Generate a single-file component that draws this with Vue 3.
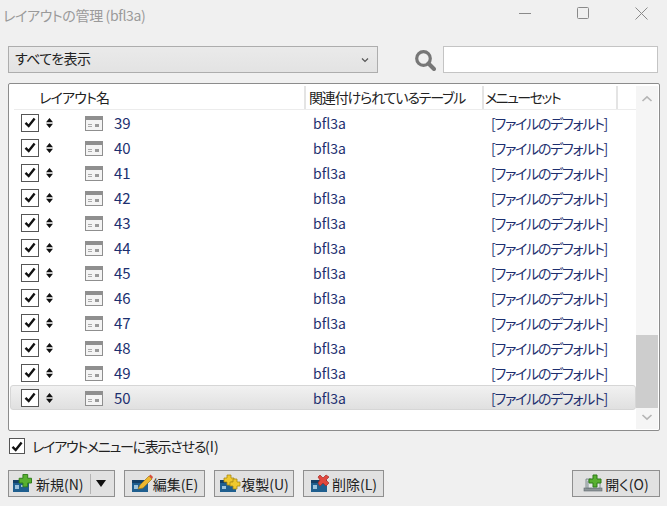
<script setup>
const rows = [39, 40, 41, 42, 43, 44, 45, 46, 47, 48, 49, 50]
const selected = 50
</script>

<template>
  <div class="window">
    <div class="titlebar">
      <span class="title">レイアウトの管理 (bfl3a)</span>
      <div class="controls">
        <svg width="12" height="12" viewBox="0 0 12 12"><path d="M0 6.5h12" stroke="#8a8a8a" fill="none" /></svg>
        <svg width="12" height="12" viewBox="0 0 12 12"><rect x="0.5" y="0.5" width="11" height="11" rx="1" stroke="#8a8a8a" fill="none" /></svg>
        <svg width="13" height="13" viewBox="0 0 13 13"><path d="M0.5 0.5l12 12M12.5 0.5l-12 12" stroke="#8a8a8a" fill="none" /></svg>
      </div>
    </div>

    <div class="filter">
      <div class="combo">
        <span class="combo-text">すべてを表示</span>
        <svg width="8" height="6" viewBox="0 0 8 6"><path d="M1 1.5l3 3 3-3" stroke="#555" stroke-width="1.2" fill="none" /></svg>
      </div>
      <svg class="search-icon" width="22" height="22" viewBox="0 0 22 22">
        <circle cx="9.5" cy="9.5" r="6.8" stroke="#777" stroke-width="3.2" fill="none" />
        <path d="M14.5 14.5l5.5 5.5" stroke="#777" stroke-width="4" stroke-linecap="round" />
      </svg>
      <input class="search" type="text" />
    </div>

    <div class="list">
      <div class="list-main">
        <div class="head">
          <div class="head-cell name"><span>レイアウト名</span></div>
          <div class="head-cell table"><span>関連付けられているテーブル</span></div>
          <div class="head-cell menu"><span>メニューセット</span></div>
          <div class="head-cell rest"></div>
        </div>
        <div class="rows">
          <div v-for="n in rows" :key="n" class="row" :class="{ selected: n === selected }">
            <span class="check">
              <svg width="12" height="11" viewBox="0 0 12 11"><path d="M1.5 5.8l3.2 3.2L10.6 1.5" stroke="#111" stroke-width="2.4" fill="none" /></svg>
            </span>
            <svg class="handle" width="7" height="10" viewBox="0 0 7 10"><path d="M3.5 0L7 4.3H0zM3.5 10L0 5.7h7z" fill="#111" /></svg>
            <svg class="layout-icon" width="18" height="15" viewBox="0 0 18 15">
              <rect x="0.5" y="0.5" width="17" height="14" fill="#f4f4f4" stroke="#8f8f8f" />
              <rect x="1" y="1" width="16" height="3" fill="#8f8f8f" />
              <rect x="3" y="8" width="4" height="1" fill="#aaa" />
              <rect x="3" y="10" width="4" height="1" fill="#aaa" />
              <rect x="10" y="8" width="4" height="3" fill="#999" />
            </svg>
            <span class="cell number">{{ n }}</span>
            <span class="cell">bfl3a</span>
            <span class="cell default-menu">[ファイルのデフォルト]</span>
          </div>
        </div>
      </div>
      <div class="scrollbar">
        <svg width="12" height="8" viewBox="0 0 12 8"><path d="M1.5 6L6 1.8 10.5 6" stroke="#b5b5b5" stroke-width="1.6" fill="none" /></svg>
        <div class="track"><div class="thumb"></div></div>
        <svg width="12" height="8" viewBox="0 0 12 8"><path d="M1.5 2L6 6.2 10.5 2" stroke="#b5b5b5" stroke-width="1.6" fill="none" /></svg>
      </div>
    </div>

    <label class="show-in-menu">
      <span class="check small">
        <svg width="12" height="11" viewBox="0 0 12 11"><path d="M1.5 5.8l3.2 3.2L10.6 1.5" stroke="#111" stroke-width="2.4" fill="none" /></svg>
      </span>
      <span class="menu-label">レイアウトメニューに表示させる<span class="hotkey">(I)</span></span>
    </label>

    <div class="buttons">
      <button class="btn new">
        <svg width="22" height="20" viewBox="0 0 22 20">
          <rect x="1" y="6" width="16" height="12" fill="#1f5f8f" />
          <rect x="1" y="6" width="16" height="3" fill="#123f66" />
          <rect x="3" y="11" width="4" height="4" fill="#9cc3dc" />
          <rect x="9" y="11" width="5" height="2" fill="#9cc3dc" />
          <path d="M11 1h5v4h4v5h-4v4h-5v-4H7V5h4z" transform="translate(0.5 -0.5) scale(0.95)" fill="#58b030" stroke="#2c7a18" />
        </svg>
        <span class="new-label">新規(N)</span>
        <i class="divider"></i>
        <svg width="10" height="7" viewBox="0 0 10 7"><path d="M0 0h10L5 7z" fill="#111" /></svg>
      </button>
      <button class="btn edit">
        <svg width="22" height="20" viewBox="0 0 22 20">
          <rect x="1" y="6" width="16" height="12" fill="#1f5f8f" />
          <rect x="1" y="6" width="16" height="3" fill="#123f66" />
          <rect x="3" y="11" width="4" height="4" fill="#9cc3dc" />
          <path d="M7 15l2-4L18 2l3 3-9 9z" fill="#edb72e" stroke="#a57a16" stroke-width="0.7" />
          <path d="M18 2l1.5-1.5 2.5 2.5L21 5z" fill="#d8503c" />
        </svg>
        <span>編集(E)</span>
      </button>
      <button class="btn copy">
        <svg width="22" height="20" viewBox="0 0 22 20">
          <rect x="1" y="6" width="16" height="12" fill="#1f5f8f" />
          <rect x="1" y="6" width="16" height="3" fill="#123f66" />
          <rect x="3" y="12" width="4" height="3" fill="#9cc3dc" />
          <path d="M8 1h4v3h3v4h-3v3H8V8H5V4h3z" fill="#f0c92e" stroke="#a88a12" stroke-width="0.8" />
          <path d="M14 5h4v3h3v4h-3v3h-4v-3h-3V8h3z" fill="#f0c92e" stroke="#a88a12" stroke-width="0.8" />
        </svg>
        <span>複製(U)</span>
      </button>
      <button class="btn remove">
        <svg width="22" height="20" viewBox="0 0 22 20">
          <rect x="1" y="6" width="16" height="12" fill="#1f5f8f" />
          <rect x="1" y="6" width="16" height="3" fill="#123f66" />
          <rect x="3" y="11" width="4" height="4" fill="#9cc3dc" />
          <path d="M8 3l2-2 3 3 3-3 3 2-3 3 3 3-3 3-3-3-3 3-2-3 2-3z" fill="#e0483e" stroke="#a52a24" stroke-width="0.7" />
        </svg>
        <span>削除(L)</span>
      </button>
      <button class="btn open">
        <svg width="22" height="20" viewBox="0 0 22 20">
          <rect x="1" y="14" width="18" height="3" fill="#8d9598" stroke="#5f6a6e" stroke-width="0.6" />
          <path d="M3 14V5h5v9z" fill="#cfd6d8" stroke="#6d787c" stroke-width="0.8" />
          <path d="M5 14V7h12v7z" fill="#e4e8e9" stroke="#6d787c" stroke-width="0.8" />
          <path d="M10 1h4v4h4v4h-4v4h-4V9H6V5h4z" fill="#58b030" stroke="#2c7a18" />
        </svg>
        <span>開く(O)</span>
      </button>
    </div>
  </div>
</template>

<style>
html,
body {
  margin: 0;
  background: #f0f0f0;
}
</style>

<style scoped>
.window {
  width: 667px;
  height: 506px;
  overflow: hidden;
  display: flex;
  flex-direction: column;
  background: #f0f0f0;
  color: #222;
  font-family: "Noto Sans CJK JP", "Noto Sans", sans-serif;
  font-size: 14px;
  font-feature-settings: "palt";
}

.titlebar {
  height: 33px;
  flex: none;
  display: flex;
  justify-content: space-between;
  align-items: center;
  padding: 0 19px 7px 3px;
  box-sizing: border-box;
}

.title {
  color: #9a9a9a;
  line-height: 26px;
  padding-top: 4px;
  letter-spacing: -0.35px;
}

.controls {
  display: flex;
  align-items: center;
  gap: 46px;
}

.filter {
  display: flex;
  align-items: center;
  margin: 13px 9px 0 8px;
  height: 27px;
}

.combo {
  width: 370px;
  height: 27px;
  box-sizing: border-box;
  display: flex;
  justify-content: space-between;
  align-items: center;
  padding: 0 8px 0 6px;
  border: 1px solid #adadad;
  background: linear-gradient(#eaeaea, #e3e3e3);
}

.combo-text {
  letter-spacing: -0.6px;
  padding-bottom: 3px;
}

.search-icon {
  margin-left: 36px;
}

.search {
  width: 215px;
  height: 27px;
  box-sizing: border-box;
  margin-left: 7px;
  border: 1px solid #c4c4c4;
  background: #fff;
  outline: none;
  padding: 0;
}

.list {
  margin: 10px 7px 0 8px;
  height: 348px;
  box-sizing: border-box;
  border: 1px solid #8c8c8c;
  border-radius: 2px;
  background: #fff;
  display: flex;
  padding: 2px 1px 1px 1px;
}

.list-main {
  flex: 1;
  min-width: 0;
  overflow: hidden;
}

.head {
  display: flex;
  height: 24px;
  margin-left: 4px;
  border-bottom: 1px solid #ececec;
  box-sizing: border-box;
  line-height: 22px;
}

.head-cell {
  box-sizing: border-box;
  border-right: 2px solid #e4e4e4;
  white-space: nowrap;
}

.head-cell.name {
  width: 292px;
  padding-left: 25px;
}

.head-cell.name span {
  letter-spacing: -0.8px;
}

.head-cell.table {
  width: 178px;
  padding-left: 3px;
}

.head-cell.table span {
  letter-spacing: -1.15px;
}

.head-cell.menu {
  width: 134px;
  padding-left: 1px;
}

.head-cell.menu span {
  letter-spacing: -1.55px;
}

.head-cell.rest {
  flex: 1;
  border-right: none;
}

.row {
  height: 25px;
  box-sizing: border-box;
  display: grid;
  grid-template-columns: 25px 39px 29px 199px 178px 1fr;
  align-items: center;
  padding-left: 11px;
  color: #1d2f6f;
  white-space: nowrap;
}

.row.selected {
  border: 1px solid #d6d6d6;
  border-radius: 3px;
  padding-left: 10px;
  background: linear-gradient(#f1f1f1, #e0e0e0);
}

.layout-icon {
  margin-top: 1px;
}

.number {
  font-size: 15px;
}

.default-menu {
  letter-spacing: -1.25px;
}

.check {
  width: 18px;
  height: 18px;
  box-sizing: border-box;
  display: flex;
  align-items: center;
  justify-content: center;
  border: 1px solid #555;
  background: #fff;
}

.check.small {
  width: 16px;
  height: 16px;
}

.scrollbar {
  width: 22px;
  flex: none;
  display: flex;
  flex-direction: column;
  align-items: center;
  background: #f5f5f5;
  padding: 9px 0 8px;
  box-sizing: border-box;
}

.track {
  flex: 1;
  width: 100%;
  display: flex;
  flex-direction: column;
  justify-content: flex-end;
  padding-bottom: 5px;
}

.thumb {
  height: 73px;
  background: #cdcdcd;
}

.show-in-menu {
  display: flex;
  align-items: center;
  gap: 7px;
  margin: 6px 0 0 9px;
  height: 18px;
}

.menu-label {
  letter-spacing: -1.25px;
}

.hotkey {
  letter-spacing: 0;
}

.buttons {
  display: flex;
  gap: 9px;
  margin: 15px 7px 0 8px;
  height: 27px;
}

.btn {
  height: 27px;
  box-sizing: border-box;
  display: flex;
  align-items: center;
  justify-content: center;
  padding: 0;
  border: 1px solid #8f8f8f;
  background: #e1e1e1;
  color: #222;
  font: inherit;
  font-feature-settings: inherit;
  white-space: nowrap;
}

.btn.new {
  width: 107px;
  justify-content: flex-start;
  padding-left: 3px;
}

.new-label {
  margin-left: 2px;
}

.btn.edit,
.btn.remove {
  width: 81px;
}

.btn.copy {
  width: 80px;
}

.btn.open {
  width: 88px;
  margin-left: auto;
}

.divider {
  width: 1px;
  height: 20px;
  background: #b4b4b4;
  margin: 0 5px 0 6px;
}
</style>
